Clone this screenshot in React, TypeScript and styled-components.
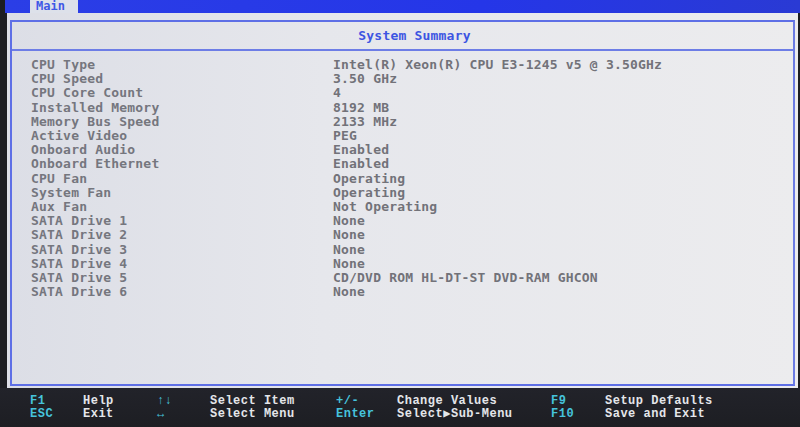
import React from 'react';
import styled, { createGlobalStyle } from 'styled-components';

const GlobalStyle = createGlobalStyle`
  html, body {
    margin: 0;
    padding: 0;
    background: #17181c;
  }
`;

const mono = `"DejaVu Sans Mono", "Liberation Mono", monospace`;

const summary: [string, string][] = [
  ['CPU Type', 'Intel(R) Xeon(R) CPU E3-1245 v5 @ 3.50GHz'],
  ['CPU Speed', '3.50 GHz'],
  ['CPU Core Count', '4'],
  ['Installed Memory', '8192 MB'],
  ['Memory Bus Speed', '2133 MHz'],
  ['Active Video', 'PEG'],
  ['Onboard Audio', 'Enabled'],
  ['Onboard Ethernet', 'Enabled'],
  ['CPU Fan', 'Operating'],
  ['System Fan', 'Operating'],
  ['Aux Fan', 'Not Operating'],
  ['SATA Drive 1', 'None'],
  ['SATA Drive 2', 'None'],
  ['SATA Drive 3', 'None'],
  ['SATA Drive 4', 'None'],
  ['SATA Drive 5', 'CD/DVD ROM HL-DT-ST DVD-RAM GHCON'],
  ['SATA Drive 6', 'None'],
];

const legend: [string, string][][] = [
  [
    ['F1', 'Help'],
    ['↑↓', 'Select Item'],
    ['+/-', 'Change Values'],
    ['F9', 'Setup Defaults'],
  ],
  [
    ['ESC', 'Exit'],
    ['↔', 'Select Menu'],
    ['Enter', 'Select▶Sub-Menu'],
    ['F10', 'Save and Exit'],
  ],
];

const App: React.FC = () => {
  return (
    <>
      <GlobalStyle />
      <Screen>
        <MenuBar>
          <MenuTab>Main</MenuTab>
        </MenuBar>
        <Display>
          <Panel>
            <PanelTitle>System Summary</PanelTitle>
            <SummaryList>
              {summary.map(([label, value]) => (
                <SummaryRow key={label}>
                  <SummaryLabel>{label}</SummaryLabel>
                  <SummaryValue>{value}</SummaryValue>
                </SummaryRow>
              ))}
            </SummaryList>
          </Panel>
        </Display>
        <Legend>
          {legend.map((row, i) => (
            <LegendRow key={i}>
              {row.map(([key, desc]) => (
                <React.Fragment key={key}>
                  <LegendKey>{key}</LegendKey>
                  <LegendDesc>{desc}</LegendDesc>
                </React.Fragment>
              ))}
            </LegendRow>
          ))}
        </Legend>
      </Screen>
    </>
  );
};

export default App;

const Screen = styled.div`
  width: 800px;
  height: 427px;
  display: flex;
  flex-direction: column;
  background: #1c1d22;
  overflow: hidden;
  font-family: ${mono};
`;

const MenuBar = styled.div`
  height: 13px;
  margin-left: 5px;
  padding-left: 25px;
  display: flex;
  background: linear-gradient(90deg, #2b3ee6 0%, #2536e8 60%, #2a3ad4 100%);
`;

const MenuTab = styled.div`
  width: 48px;
  height: 13px;
  background: #dde1ea;
  color: #3f58e6;
  font-size: 12px;
  font-weight: 700;
  line-height: 12px;
  padding-left: 6px;
  box-sizing: border-box;
`;

const Display = styled.div`
  height: 375px;
  margin-left: 7px;
  margin-right: 2px;
  padding: 7px 3px 2px 3px;
  box-sizing: border-box;
  display: flex;
  background: linear-gradient(90deg, #dcdee6 0%, #e6e7ec 40%, #ececee 100%);
`;

const Panel = styled.div`
  flex: 1;
  display: flex;
  flex-direction: column;
  border: 2px solid #5e6fe6;
  border-right-color: #6b7be4;
`;

const PanelTitle = styled.div`
  height: 27px;
  display: flex;
  align-items: center;
  justify-content: center;
  padding-left: 24px;
  border-bottom: 2px solid #6d7de6;
  color: #3d55e2;
  font-size: 13px;
  font-weight: 700;
  letter-spacing: 0.2px;
`;

const SummaryList = styled.div`
  display: flex;
  flex-direction: column;
  padding: 7px 0 0 19px;
`;

const SummaryRow = styled.div`
  height: 14.2px;
  display: grid;
  grid-template-columns: 302px 1fr;
  align-items: center;
  font-size: 13px;
  font-weight: 700;
  letter-spacing: 0.2px;
  line-height: 14px;
  white-space: nowrap;
`;

const SummaryLabel = styled.div`
  color: #75767e;
`;

const SummaryValue = styled.div`
  color: #727279;
`;

const Legend = styled.div`
  flex: 1;
  display: flex;
  flex-direction: column;
  padding: 6px 0 0 30px;
  background: linear-gradient(180deg, #22232a 0%, #1d1e23 100%);
`;

const LegendRow = styled.div`
  height: 13.5px;
  display: grid;
  grid-template-columns: 53px 74px 53px 126px 61px 154px 54px 1fr;
  align-items: center;
  font-family: "Liberation Mono", monospace;
  font-size: 12px;
  font-weight: 700;
  letter-spacing: 0.5px;
  line-height: 12px;
  white-space: nowrap;
`;

const LegendKey = styled.div`
  color: #46c3dc;
`;

const LegendDesc = styled.div`
  color: #e4e6ea;
`;
